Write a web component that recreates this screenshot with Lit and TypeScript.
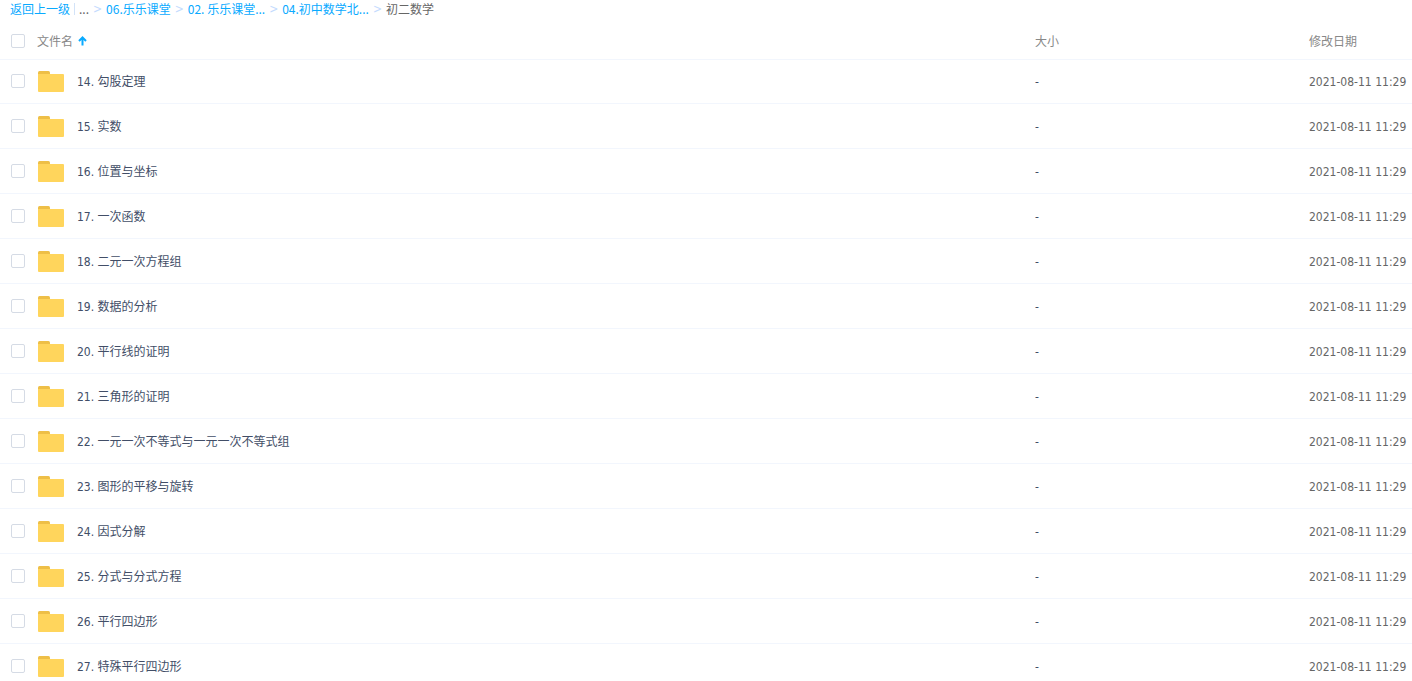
import { LitElement, html, css } from "lit";
import { customElement, state } from "lit/decorators.js";

interface Entry {
  name: string;
  size: string;
  modified: string;
}

const NAMES = [
  "14. 勾股定理",
  "15. 实数",
  "16. 位置与坐标",
  "17. 一次函数",
  "18. 二元一次方程组",
  "19. 数据的分析",
  "20. 平行线的证明",
  "21. 三角形的证明",
  "22. 一元一次不等式与一元一次不等式组",
  "23. 图形的平移与旋转",
  "24. 因式分解",
  "25. 分式与分式方程",
  "26. 平行四边形",
  "27. 特殊平行四边形",
];

const ENTRIES: Entry[] = NAMES.map((name) => ({
  name,
  size: "-",
  modified: "2021-08-11 11:29",
}));

@customElement("path-bar")
class PathBar extends LitElement {
  static styles = css`
    :host {
      display: block;
    }
    .bar {
      display: flex;
      align-items: center;
      height: 18px;
      padding: 0 0 2px 10px;
      color: #666;
      white-space: nowrap;
    }
    .link {
      color: #09aaff;
      text-decoration: none;
    }
    .divider {
      width: 1px;
      height: 12px;
      margin: 0 4px;
      background: #d3e3f8;
    }
    .sep {
      margin: 0 4px;
      color: #c4dbfe;
      font-family: "DejaVu Sans Condensed", sans-serif;
    }
  `;

  render() {
    const sep = html`<span class="sep" aria-hidden="true">&gt;</span>`;
    return html`
      <nav class="bar" aria-label="路径">
        <a class="link" href="#up">返回上一级</a>
        <span class="divider"></span>
        <span>...</span>
        ${["06.乐乐课堂", "02. 乐乐课堂...", "04.初中数学北..."].map(
          (label) => html`${sep}<a class="link" href="#dir">${label}</a>`
        )}
        ${sep}<span>初二数学</span>
      </nav>
    `;
  }
}

@customElement("app-root")
class AppRoot extends LitElement {
  @state() private selected = new Set<string>();

  static styles = css`
    :host {
      display: block;
      height: 100vh;
      overflow: hidden;
      background: #fff;
      font: 12px/20px "Noto Sans CJK SC", sans-serif;
      color: #424e67;
    }
    .files {
      width: 100%;
      border-collapse: separate;
      border-spacing: 0;
      table-layout: fixed;
    }
    .size {
      width: 274px;
    }
    .date {
      width: 103px;
    }
    th,
    td {
      box-sizing: border-box;
      padding: 0;
      text-align: left;
      font-weight: 400;
      white-space: nowrap;
    }
    th {
      height: 39px;
      padding-top: 3px;
      color: #888;
    }
    td {
      height: 45px;
      padding-top: 2px;
      border-bottom: 1px solid #f2f6fd;
      font-family: "DejaVu Sans Condensed", "Noto Sans CJK SC", sans-serif;
    }
    tbody tr:first-child td {
      padding-top: 0;
      border-top: 1px solid #f2f6fd;
    }
    td.modified {
      color: #666;
    }
    .cell {
      display: flex;
      align-items: center;
      padding-left: 11px;
    }
    .tick {
      appearance: none;
      box-sizing: border-box;
      flex: none;
      width: 14px;
      height: 14px;
      margin: 0;
      border: 1px solid #d5dbe5;
      border-radius: 2px;
      background: #fff;
    }
    td .tick {
      margin-bottom: 2px;
    }
    .tick:checked {
      border-color: #09aaff;
      background: #09aaff;
    }
    .sort {
      display: flex;
      align-items: center;
      gap: 5px;
      margin-left: 12px;
      padding: 0;
      border: 0;
      background: none;
      color: inherit;
      font: inherit;
    }
    .folder {
      flex: none;
      width: 26px;
      height: 22px;
      margin: 0 13px;
    }
  `;

  private toggle(name: string) {
    const next = new Set(this.selected);
    if (!next.delete(name)) next.add(name);
    this.selected = next;
  }

  private toggleAll() {
    this.selected =
      this.selected.size === NAMES.length ? new Set() : new Set(NAMES);
  }

  private renderRow(entry: Entry, i: number) {
    return html`
      <tr>
        <td>
          <div class="cell">
            <input
              class="tick"
              type="checkbox"
              id="f${i}"
              .checked=${this.selected.has(entry.name)}
              @change=${() => this.toggle(entry.name)}
            />
            <svg class="folder" viewBox="0 0 26 22" aria-hidden="true">
              <path d="M0 5V1.5Q0 0 1.5 0H10.5Q12 0 12 1.5V5Z" fill="#eebf47" />
              <path
                d="M0 3H25Q26 3 26 4V20Q26 21 25 21H1Q0 21 0 20Z"
                fill="#ffd55c"
              />
            </svg>
            <label for="f${i}">${entry.name}</label>
          </div>
        </td>
        <td>${entry.size}</td>
        <td class="modified">${entry.modified}</td>
      </tr>
    `;
  }

  render() {
    return html`
      <path-bar></path-bar>
      <table class="files">
        <colgroup>
          <col />
          <col class="size" />
          <col class="date" />
        </colgroup>
        <thead>
          <tr>
            <th scope="col" aria-sort="ascending">
              <div class="cell">
                <input
                  class="tick"
                  type="checkbox"
                  aria-label="全选"
                  .checked=${this.selected.size === NAMES.length}
                  @change=${this.toggleAll}
                />
                <button class="sort" type="button">
                  文件名
                  <svg width="9" height="10" viewBox="0 0 9 10" aria-hidden="true">
                    <path
                      d="M4.5 9.5V1.5M1 5L4.5 1.5L8 5"
                      fill="none"
                      stroke="#09aaff"
                      stroke-width="2"
                    />
                  </svg>
                </button>
              </div>
            </th>
            <th scope="col">大小</th>
            <th scope="col">修改日期</th>
          </tr>
        </thead>
        <tbody>
          ${ENTRIES.map((entry, i) => this.renderRow(entry, i))}
        </tbody>
      </table>
    `;
  }
}
